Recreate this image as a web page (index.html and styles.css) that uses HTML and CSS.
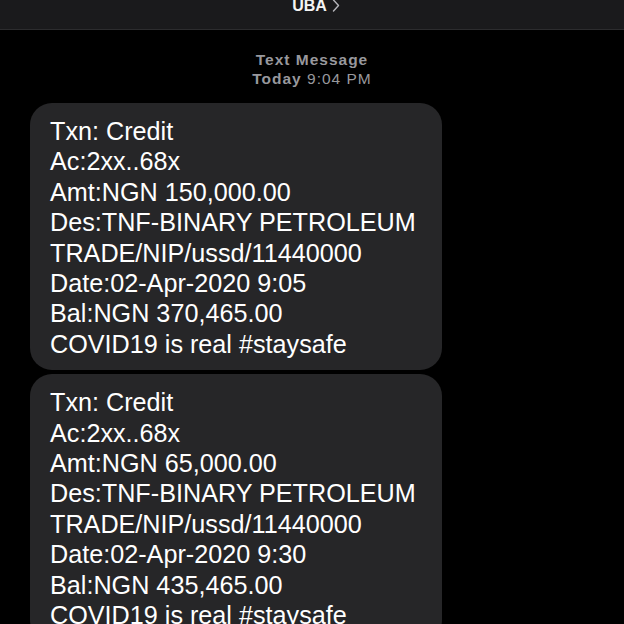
FILE: index.html
```html
<!DOCTYPE html>
<html lang="en">
    <head>
        <meta charset="UTF-8">
        <title>UBA</title>
        <link rel="stylesheet" href="styles.css">
    </head>
    <body>
        <header class="barra">
            <span class="contacto">UBA</span>
            <svg class="flecha" width="8" height="13" viewBox="0 0 8 13">
                <path d="M1.5 1 L6.5 6.5 L1.5 12" fill="none" stroke="#b5b5ba" stroke-width="1.4" stroke-linecap="round" stroke-linejoin="round"/>
            </svg>
        </header>
        <main class="conversacion">
            <div class="marca">
                <p class="tipo">Text Message</p>
                <p class="hora"><b>Today</b> 9:04 PM</p>
            </div>
            <div class="burbuja">
                <p>Txn: Credit</p>
                <p>Ac:2xx..68x</p>
                <p>Amt:NGN 150,000.00</p>
                <p>Des:TNF-BINARY PETROLEUM TRADE/NIP/ussd/11440000</p>
                <p>Date:02-Apr-2020 9:05</p>
                <p>Bal:NGN 370,465.00</p>
                <p>COVID19 is real #staysafe</p>
            </div>
            <div class="burbuja">
                <p>Txn: Credit</p>
                <p>Ac:2xx..68x</p>
                <p>Amt:NGN 65,000.00</p>
                <p>Des:TNF-BINARY PETROLEUM TRADE/NIP/ussd/11440000</p>
                <p>Date:02-Apr-2020 9:30</p>
                <p>Bal:NGN 435,465.00</p>
                <p>COVID19 is real #staysafe</p>
            </div>
        </main>
    </body>
</html>
```
FILE: styles.css
```css
* {
    margin: 0;
    padding: 0;
    box-sizing: border-box;
}
body {
    background: #000;
    font-family: "Liberation Sans", Arial, sans-serif;
    color: #fff;
    height: 624px;
    overflow: hidden;
}
.barra {
    height: 30px;
    background: #1a1a1c;
    border-bottom: 1px solid #2c2c2e;
    display: flex;
    justify-content: center;
    align-items: flex-start;
    gap: 5px;
    padding-left: 8px;
}
.contacto {
    font-size: 16px;
    font-weight: bold;
    line-height: 16px;
    margin-top: -2px;
    color: #f4f4f4;
}
.flecha {
    margin-top: -1px;
}
.conversacion {
    display: flex;
    flex-direction: column;
    align-items: flex-start;
    gap: 4px;
    padding: 21px 0 0 30px;
}
.marca {
    align-self: stretch;
    text-align: center;
    color: #98989d;
    font-size: 15.5px;
    line-height: 18.6px;
    letter-spacing: 1px;
    margin-right: 30px;
    margin-bottom: 11px;
}
.tipo {
    font-weight: bold;
}
.burbuja {
    width: 412px;
    background: #262628;
    border-radius: 22px;
    padding: 12.7px 14px 11.3px 20px;
    font-size: 25.2px;
    line-height: 30.4px;
}
```
